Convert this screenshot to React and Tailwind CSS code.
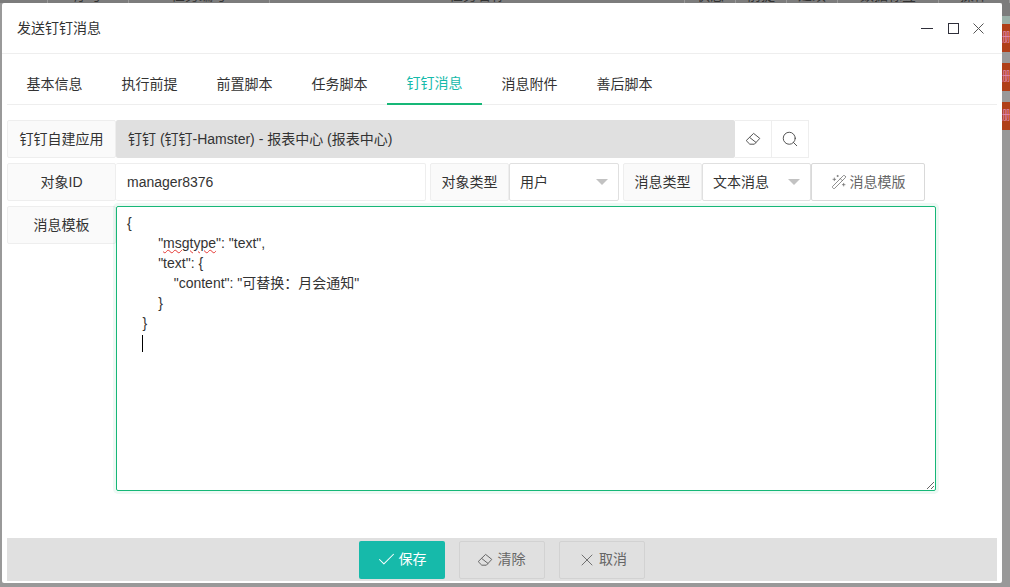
import React from "react";
import { Search, WandSparkles, Check, X } from "lucide-react";

const font = { fontFamily: '"Liberation Sans","Noto Sans CJK SC",sans-serif' };

function Eraser({ size = 16, className = "" }) {
  return (
    <svg width={size} height={size} viewBox="0 0 16 16" fill="none" stroke="currentColor" strokeWidth="1" className={className}>
      <path d="M1.2 9.6 8.6 2.4 14.8 7.4 9.4 13.2H4.8Z" strokeLinejoin="round" />
      <path d="M4.6 6.4 11.2 11.6" />
    </svg>
  );
}

function Label({ children, w = "w-[109px]" }) {
  return (
    <div className={`${w} h-[38px] shrink-0 flex items-center justify-center bg-[#fafafa] border border-[#eeeeee] rounded-[2px] text-[14px] text-[#333333]`}>
      {children}
    </div>
  );
}

function Select({ children, w }) {
  return (
    <div className={`${w} h-[38px] shrink-0 flex items-center justify-between pl-[10px] pr-[10px] bg-white border border-[#e0e0e0] rounded-[2px] text-[14px] text-[#333333]`}>
      <span>{children}</span>
      <span className="w-0 h-0 border-x-[6px] border-x-transparent border-t-[6px] border-t-[#c2c2c2]" />
    </div>
  );
}

const tabs = ["基本信息", "执行前提", "前置脚本", "任务脚本", "钉钉消息", "消息附件", "善后脚本"];
const cols = ["w-[48px]", "w-[81px]", "w-[141px]", "w-[415px]", "w-[51px]", "w-[51px]", "w-[51px]", "w-[101px]", "w-[71px]"];
const colText = ["", "序号", "任务编号", "任务名称", "状态", "前提", "延续", "数据标签", "操作"];

export default function App() {
  return (
    <div style={font} className="w-[1010px] h-[587px] bg-[#999999] overflow-hidden flex flex-col">
      <div className="h-[3px] shrink-0 flex bg-[#7c7c7c] overflow-hidden">
        {cols.map((c, i) => (
          <div key={i} className={`${c} h-[3px] shrink-0 border-r border-[#999999] text-center text-[14px] leading-[3px] text-[#333333] overflow-hidden`}>
            <span className="relative top-[-6px]">{colText[i]}</span>
          </div>
        ))}
      </div>
      <div className="flex h-[580px] shrink-0">
        <div className="w-[2px] shrink-0" />
        <div className="w-[1000px] h-[580px] shrink-0 bg-white rounded-[2px] flex flex-col">
          <div className="h-[51px] shrink-0 border-b border-[#eeeeee] flex items-center justify-between pl-[15px] pr-[18px]">
            <span className="text-[14px] text-[#333333]">发送钉钉消息</span>
            <div className="flex items-center gap-[14px]">
              <svg width="12" height="11" viewBox="0 0 12 11" className="text-[#2f2f3a] mr-[1px]">
                <path d="M0 5.5H12" stroke="currentColor" strokeWidth="1" />
              </svg>
              <div className="w-[11px] h-[11px] border border-[#2f2f3a]" />
              <svg width="11" height="11" viewBox="0 0 11 11" className="text-[#555555]">
                <path d="M.5.5 10.5 10.5M10.5.5.5 10.5" stroke="currentColor" strokeWidth="1" />
              </svg>
            </div>
          </div>

          <div className="mx-[5px] w-[990px] h-[51px] shrink-0 flex border-b border-[#eeeeee]">
            {tabs.map((t, i) => (
              <div
                key={t}
                className={`w-[95px] h-[51px] pt-[9px] flex items-center justify-center text-[14px] ${
                  i === 4 ? "text-[#16baaa] border-b-2 border-[#16b777]" : "text-[#333333]"
                }`}
              >
                {t}
              </div>
            ))}
          </div>

          <div className="pl-[5px] pt-[15px] flex flex-col gap-[5px] flex-1">
            <div className="flex">
              <Label>钉钉自建应用</Label>
              <div className="w-[619px] h-[38px] flex items-center pl-[12px] pt-[1px] bg-[#e0e0e0] text-[14px] text-[#333333] rounded-[2px]">
                钉钉 (钉钉-Hamster) - 报表中心 (报表中心)
              </div>
              <div className="w-[37px] h-[38px] flex items-center justify-center border border-[#eeeeee] border-l-0 text-[#555555]">
                <Eraser size={16} />
              </div>
              <div className="w-[37px] h-[38px] flex items-center justify-center border border-[#eeeeee] border-l-0 text-[#444444]">
                <Search size={18} strokeWidth={1.2} />
              </div>
            </div>

            <div className="flex">
              <Label>对象ID</Label>
              <div className="w-[310px] h-[38px] flex items-center pl-[11px] border border-[#eeeeee] border-l-0 text-[14px] text-[#333333] rounded-[2px]">
                manager8376
              </div>
              <div className="w-[4px]" />
              <Label w="w-[79px]">对象类型</Label>
              <Select w="w-[110px]">用户</Select>
              <div className="w-[4px]" />
              <Label w="w-[79px]">消息类型</Label>
              <Select w="w-[109px]">文本消息</Select>
              <div className="w-[114px] h-[38px] flex items-center justify-center gap-[3px] border border-[#d9d9d9] rounded-[2px] text-[14px] text-[#666666]">
                <WandSparkles size={16} strokeWidth={1.1} />
                <span className="pt-[1px]">消息模版</span>
              </div>
            </div>

            <div className="flex">
              <Label>消息模板</Label>
              <div className="w-[820px] h-[285px] resize overflow-auto border border-[#16b777] rounded-[2px] shadow-[0_0_0_3px_rgba(22,183,119,0.08)] pl-[10px] pt-[6px] text-[14px] leading-[20px] text-[#333333] whitespace-pre-wrap">
                {"{\n        \""}
                <span className="underline decoration-wavy decoration-[#e53935] decoration-1 underline-offset-[1px]">msgtype</span>
                {"\": \"text\",\n        \"text\": {\n            \"content\": \"可替换：月会通知\"\n        }\n    }\n   "}
                <span className="inline-block w-[1px] h-[17px] bg-black align-[-4px] ml-[3px]" />
              </div>
            </div>
          </div>

          <div className="mx-[5px] w-[990px] h-[43px] shrink-0 mb-[2px] bg-[#e0e0e0] flex items-center justify-center gap-[14px] text-[14px]">
            <div className="w-[86px] h-[38px] bg-[#16baaa] text-white rounded-[2px] flex items-center justify-center gap-[2px]">
              <Check size={21} strokeWidth={1.2} className="-ml-[2px]" />
              保存
            </div>
            <div className="w-[86px] h-[38px] border border-[#d2d2d2] text-[#666666] rounded-[2px] flex items-center justify-center gap-[3px]">
              <Eraser size={16} className="-ml-[2px] mr-[2px]" />
              清除
            </div>
            <div className="w-[86px] h-[38px] border border-[#d2d2d2] text-[#666666] rounded-[2px] flex items-center justify-center gap-[2px]">
              <X size={20} strokeWidth={1.1} />
              取消
            </div>
          </div>
        </div>
        <div className="flex-1 flex flex-col">
          <div className="h-[13px] shrink-0 bg-[#7c7c7c]" />
          <div className="h-[8px] shrink-0 bg-[#9ab0a8]" />
          <div className="flex flex-col gap-[11px]">
            {[0, 1, 2].map((i) => (
              <div key={i} className="h-[28px] bg-[#b03f18] overflow-hidden text-[12px] leading-[28px] text-[#e08ab0] whitespace-nowrap">
                删除
              </div>
            ))}
          </div>
        </div>
      </div>
    </div>
  );
}
